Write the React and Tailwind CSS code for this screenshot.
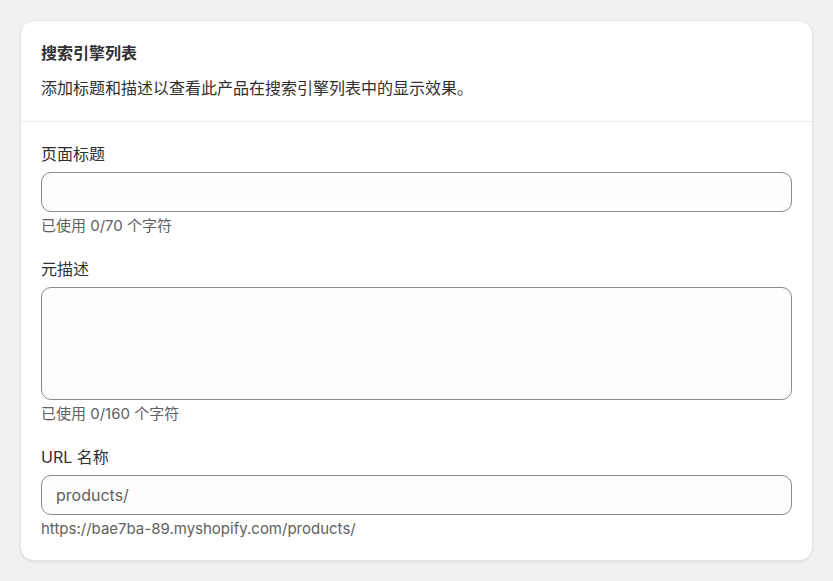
export default function App() {
  const font = { fontFamily: 'Inter, "Noto Sans CJK SC", sans-serif' };
  return (
    <div className="min-h-[581px] w-full bg-[#f1f1f1] pt-5 pb-5 px-5" style={font}>
      <div className="bg-white rounded-[14px] border border-[#e6e6e6] shadow-[0_1px_2px_rgba(0,0,0,0.08)] text-[#303030]">
        <div className="px-5 pt-[22px] pb-[23px] border-b border-[#ebebeb]">
          <h2 className="text-[16px] leading-5 font-semibold">搜索引擎列表</h2>
          <p className="mt-[15px] text-[16px] leading-5">添加标题和描述以查看此产品在搜索引擎列表中的显示效果。</p>
        </div>
        <div className="px-5 pt-[22px] pb-[21px]">
          <label className="block text-[16px] leading-5">页面标题</label>
          <input
            className="mt-2 block w-full h-10 rounded-[10px] border border-[#8a8a8a] bg-[#fdfdfd] px-3.5 text-[15px] outline-none"
            type="text"
          />
          <p className="mt-1 text-[15px] leading-5 text-[#616161]">已使用 0/70 个字符</p>

          <label className="mt-[23px] block text-[16px] leading-5">元描述</label>
          <textarea className="mt-2 block w-full h-[113px] resize-none rounded-[10px] border border-[#8a8a8a] bg-[#fdfdfd] px-3.5 py-2 text-[15px] outline-none" />
          <p className="mt-1 text-[15px] leading-5 text-[#616161]">已使用 0/160 个字符</p>

          <label className="mt-[23px] block text-[16px] leading-5">URL 名称</label>
          <div className="mt-2 flex items-center w-full h-10 rounded-[10px] border border-[#8a8a8a] bg-[#fdfdfd] px-3.5">
            <span className="text-[16px] text-[#616161]">products/</span>
          </div>
          <p className="mt-1 text-[15px] leading-5 text-[#616161]">https://bae7ba-89.myshopify.com/products/</p>
        </div>
      </div>
    </div>
  );
}
